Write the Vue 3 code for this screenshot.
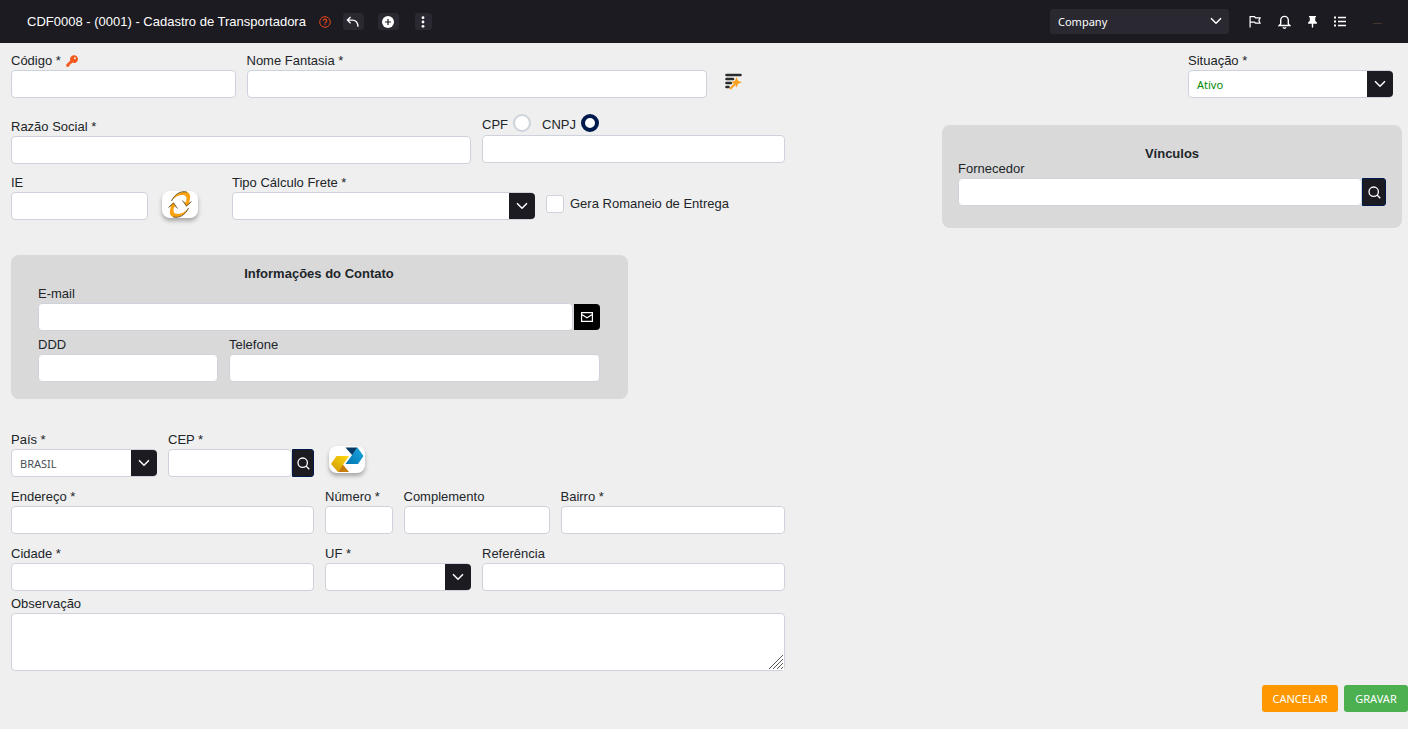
<script setup>
import { reactive } from 'vue'

const form = reactive({
  codigo: '',
  nomeFantasia: '',
  razaoSocial: '',
  tipoDocumento: 'cnpj',
  documento: '',
  ie: '',
  tipoFrete: '',
  romaneio: false,
  email: '',
  ddd: '',
  telefone: '',
  pais: 'BRASIL',
  cep: '',
  endereco: '',
  numero: '',
  complemento: '',
  bairro: '',
  cidade: '',
  uf: '',
  referencia: '',
  observacao: '',
  situacao: 'Ativo',
  fornecedor: '',
  empresa: 'Company',
})
</script>

<template>
  <div class="page">
    <header class="topbar">
      <h1 class="title">CDF0008 - (0001) - Cadastro de Transportadora</h1>
      <div class="title-actions">
        <button type="button" class="help" aria-label="Ajuda">
          <svg width="12" height="12" viewBox="0 0 12 12" fill="none" stroke="currentColor">
            <circle cx="6" cy="6" r="5.3" />
            <path d="M4.3 4.8a1.7 1.7 0 1 1 2.5 1.5c-.5.3-.8.5-.8 1.1M6 8.2v1.1" stroke-width="1.2" />
          </svg>
        </button>
        <button type="button" class="chip" aria-label="Voltar">
          <svg width="14" height="12" viewBox="0 0 14 12" fill="none" stroke="currentColor" stroke-width="1.3">
            <path d="M4.6 1 1.4 4.1l3.2 3.1M1.6 4.1h4.6c3.6 0 5.6 2.6 5.8 6.6" />
          </svg>
        </button>
        <button type="button" class="chip chip-add" aria-label="Adicionar">
          <svg width="12" height="12" viewBox="0 0 12 12">
            <circle cx="6" cy="6" r="6" fill="#fff" />
            <path d="M6 3v6M3 6h6" stroke="#1c1b21" stroke-width="1.2" />
          </svg>
        </button>
        <button type="button" class="chip chip-more" aria-label="Mais opções">
          <svg width="4" height="12" viewBox="0 0 4 12" fill="currentColor">
            <circle cx="2" cy="1.7" r="1.4" />
            <circle cx="2" cy="6" r="1.4" />
            <circle cx="2" cy="10.3" r="1.4" />
          </svg>
        </button>
      </div>

      <div class="company">
        <select v-model="form.empresa" aria-label="Empresa">
          <option>Company</option>
        </select>
        <svg width="12" height="8" viewBox="0 0 12 8" fill="none" stroke="currentColor" stroke-width="1.5">
          <path d="m1 1.2 5 5 5-5" />
        </svg>
      </div>

      <nav class="tools" aria-label="Ferramentas">
        <button type="button" aria-label="Sinalizar">
          <svg width="12" height="13" viewBox="0 0 12 13" fill="none" stroke="currentColor" stroke-width="1.2">
            <path d="M1.1 12.6V1.600h4.500l.8 1.200h4.700L9.900 5.400l1.200 2.800H6.400L5.600 7.200H1.100" />
          </svg>
        </button>
        <button type="button" aria-label="Notificações">
          <svg width="13" height="14" viewBox="0 0 13 14" fill="none" stroke="currentColor" stroke-width="1.4">
            <path d="M2.700 9V5.200a3.800 3.800 0 0 1 7.600 0V9l1.500 1.500H1.200zM5 12.300c.3.600.8.900 1.500.9s1.200-.3 1.500-.9" />
          </svg>
        </button>
        <button type="button" aria-label="Fixar">
          <svg width="9" height="12" viewBox="0 0 9 12" fill="currentColor">
            <path d="M1 0h7v1.200H7.200v3.600L8.900 6.500v1.300H5.200V11l-.7 1-.7-1V7.800H.1V6.500l1.700-1.700V1.200H1z" />
          </svg>
        </button>
        <button type="button" aria-label="Lista">
          <svg width="12" height="11" viewBox="0 0 12 11" fill="currentColor">
            <path d="M0 .5h2v2H0zM0 4.500h2v2H0zM0 8.500h2v2H0zM4 .800h8v1.400H4zM4 4.800h8v1.400H4zM4 8.800h8v1.400H4z" />
          </svg>
        </button>
        <span class="user-mark"></span>
      </nav>
    </header>

    <form class="body" @submit.prevent>
      <div class="main">
        <div class="row">
          <div class="field s3">
            <label for="codigo">Código *
              <svg class="key" width="12" height="12" viewBox="0 0 12 12" fill="#f4581c">
                <path fill-rule="evenodd" d="M7.800.3a3.800 3.800 0 1 1-1.100 7.300l-.9.900H4.700v1.100H3.600v1.200l-.9.900H.3V9.400l4-4A3.800 3.800 0 0 1 7.800.3zm1.100 1.900a1 1 0 1 0 0 2 1 1 0 0 0 0-2z" />
              </svg>
            </label>
            <input id="codigo" v-model="form.codigo" type="text" />
          </div>
          <div class="field s6">
            <label for="nome">Nome Fantasia *</label>
            <input id="nome" v-model="form.nomeFantasia" type="text" />
          </div>
          <button type="button" class="magic" aria-label="Preencher automaticamente">
            <svg width="18" height="17" viewBox="0 0 18 17" fill="none" stroke-linecap="round">
              <path d="M1.500 2h14M1.500 6h6.500M1.500 10h4.500M1.500 14h2" stroke="#2b2b2b" stroke-width="2.600" />
              <path d="m5.500 15.500 4-4" stroke="#f9a01b" stroke-width="2" />
              <path d="m11.500 4 1.500 3.700 4 1.500-4 1.500-1.500 4-1.500-4L6 9.200 10 7.700z" fill="#f9a01b" />
            </svg>
          </button>
        </div>

        <div class="row row-document">
          <div class="field s6">
            <label for="razao">Razão Social *</label>
            <input id="razao" v-model="form.razaoSocial" type="text" />
          </div>
          <div class="field s4">
            <div class="radios">
              <label for="cpf">CPF</label>
              <input id="cpf" v-model="form.tipoDocumento" type="radio" name="doc" value="cpf" />
              <label for="cnpj">CNPJ</label>
              <input id="cnpj" v-model="form.tipoDocumento" type="radio" name="doc" value="cnpj" />
            </div>
            <input v-model="form.documento" type="text" aria-label="Número do documento" />
          </div>
        </div>

        <div class="row-freight">
          <div class="field ie">
            <label for="ie">IE</label>
            <input id="ie" v-model="form.ie" type="text" />
          </div>
          <button type="button" class="tile" aria-label="Consultar IE">
            <svg width="26" height="27" viewBox="0 0 26 27">
              <g v-for="turn in [0, 180]" :key="turn" :transform="`rotate(${turn} 13 13.5)`">
                <path d="M4.500 10C7.500 3 15-.8 20.500 1.300c3.500 1.600 3 6.200 1.500 10.200l2-.8-4.500 5-2.500-5.200 1.800.8c1-2.800 1.200-5.800-1-6.800C13.500 2.800 7.500 6 4.500 10z" fill="#f9a10c" />
                <path d="M4.500 10C7.500 3 14.500-.8 20 1.200M15.500 9.500l4 5.500 5-4.500" fill="none" stroke="#5d482c" stroke-width=".9" />
              </g>
            </svg>
          </button>
          <div class="field">
            <label for="frete">Tipo Cálculo Frete *</label>
            <div class="select">
              <select id="frete" v-model="form.tipoFrete"><option value=""></option></select>
              <span class="arrow"><svg width="12" height="8" viewBox="0 0 12 8"><path d="m1 1.200 5 5 5-5" /></svg></span>
            </div>
          </div>
          <div class="check">
            <input id="romaneio" v-model="form.romaneio" type="checkbox" />
            <label for="romaneio">Gera Romaneio de Entrega</label>
          </div>
        </div>

        <div class="row row-contact">
          <section class="card contact s8">
            <h2>Informações do Contato</h2>
            <div class="field">
              <label for="email">E-mail</label>
              <div class="group">
                <input id="email" v-model="form.email" type="email" />
                <button type="button" class="mail" aria-label="Enviar e-mail">
                  <svg width="12" height="10" viewBox="0 0 12 10" fill="none" stroke="#fff" stroke-width="1.200">
                    <path d="M.6.6h10.800v8.800H.6zM.8 2.600 6 5.800l5.200-3.200" />
                  </svg>
                </button>
              </div>
            </div>
            <div class="phones">
              <div class="field">
                <label for="ddd">DDD</label>
                <input id="ddd" v-model="form.ddd" type="tel" />
              </div>
              <div class="field">
                <label for="telefone">Telefone</label>
                <input id="telefone" v-model="form.telefone" type="tel" />
              </div>
            </div>
          </section>
        </div>

        <div class="row row-country">
          <div class="field s2">
            <label for="pais">País *</label>
            <div class="select">
              <select id="pais" v-model="form.pais"><option>BRASIL</option></select>
              <span class="arrow"><svg width="12" height="8" viewBox="0 0 12 8"><path d="m1 1.200 5 5 5-5" /></svg></span>
            </div>
          </div>
          <div class="field s2">
            <label for="cep">CEP *</label>
            <div class="group">
              <input id="cep" v-model="form.cep" type="text" />
              <button type="button" class="search search-cep" aria-label="Buscar CEP">
                <svg width="13" height="13" viewBox="0 0 13 13"><circle cx="5.700" cy="5.700" r="4.700" /><path d="m9 9 3.300 3.300" /></svg>
              </button>
            </div>
          </div>
          <button type="button" class="tile tile-cep" aria-label="Consultar nos Correios">
            <svg width="34" height="26" viewBox="0 0 34 26">
              <defs>
                <linearGradient id="gold" x1="1" y1="0" x2="0" y2="1"><stop offset="0" stop-color="#ffdd12" /><stop offset="1" stop-color="#cf9500" /></linearGradient>
                <linearGradient id="blue" x1="1" y1="0" x2="0" y2="1"><stop offset="0" stop-color="#1ba9e3" /><stop offset="1" stop-color="#0075ae" /></linearGradient>
              </defs>
              <path d="M15.500.5h12l-5 8z" fill="#073b65" />
              <path d="M27.500.5 33.500 9l-5.500 8H15.500z" fill="url(#blue)" />
              <path d="M8 25h11l-6.500-8z" fill="#c67b0b" />
              <path d="M6.500 9H19L8 25 1 17z" fill="url(#gold)" />
            </svg>
          </button>
        </div>

        <div class="row row-close">
          <div class="field s4">
            <label for="endereco">Endereço *</label>
            <input id="endereco" v-model="form.endereco" type="text" />
          </div>
          <div class="field s1">
            <label for="numero">Número *</label>
            <input id="numero" v-model="form.numero" type="text" />
          </div>
          <div class="field s2">
            <label for="complemento">Complemento</label>
            <input id="complemento" v-model="form.complemento" type="text" />
          </div>
          <div class="field s3">
            <label for="bairro">Bairro *</label>
            <input id="bairro" v-model="form.bairro" type="text" />
          </div>
        </div>

        <div class="row row-close">
          <div class="field s4">
            <label for="cidade">Cidade *</label>
            <input id="cidade" v-model="form.cidade" type="text" />
          </div>
          <div class="field s2">
            <label for="uf">UF *</label>
            <div class="select">
              <select id="uf" v-model="form.uf"><option value=""></option></select>
              <span class="arrow"><svg width="12" height="8" viewBox="0 0 12 8"><path d="m1 1.200 5 5 5-5" /></svg></span>
            </div>
          </div>
          <div class="field s4">
            <label for="referencia">Referência</label>
            <input id="referencia" v-model="form.referencia" type="text" />
          </div>
        </div>

        <div class="field notes">
          <label for="obs">Observação</label>
          <textarea id="obs" v-model="form.observacao"></textarea>
          <svg class="grip" width="16" height="16" viewBox="0 0 16 16">
            <path d="M1 15 15 1M5 15 15 5M9 15l6-6M13 15l2-2" fill="none" stroke="#555" />
          </svg>
        </div>
      </div>

      <aside class="side">
        <div class="field status">
          <label for="situacao">Situação *</label>
          <div class="select">
            <select id="situacao" v-model="form.situacao"><option>Ativo</option></select>
            <span class="arrow"><svg width="12" height="8" viewBox="0 0 12 8"><path d="m1 1.200 5 5 5-5" /></svg></span>
          </div>
        </div>
        <section class="card links">
          <h2>Vínculos</h2>
          <div class="field">
            <label for="fornecedor">Fornecedor</label>
            <div class="group">
              <input id="fornecedor" v-model="form.fornecedor" type="text" />
              <button type="button" class="search" aria-label="Buscar fornecedor">
                <svg width="13" height="13" viewBox="0 0 13 13"><circle cx="5.700" cy="5.700" r="4.700" /><path d="m9 9 3.300 3.300" /></svg>
              </button>
            </div>
          </div>
        </section>
      </aside>

      <footer class="actions">
        <button type="button" class="cancel">CANCELAR</button>
        <button type="submit" class="save">GRAVAR</button>
      </footer>
    </form>
  </div>
</template>

<style>
body {
  background: #efefef;
}
</style>

<style scoped>
.page {
  --dark: #1c1b21;
  --line: #ced2db;
  font-family: "Liberation Sans", Arial, sans-serif;
  font-size: 13px;
  color: #212529;
}
.page *,
.page *::before {
  box-sizing: border-box;
}
button,
input,
select,
textarea {
  font: inherit;
  color: inherit;
  margin: 0;
}
button {
  border: 0;
  padding: 0;
  background: none;
  cursor: pointer;
  display: flex;
  align-items: center;
  justify-content: center;
}

.topbar {
  display: flex;
  align-items: center;
  height: 43px;
  padding: 0 26px 0 27px;
  background: var(--dark);
  color: #fff;
}
.title {
  margin: 0;
  font-size: 13px;
  font-weight: 400;
  line-height: 20px;
  white-space: nowrap;
}
.title-actions {
  display: flex;
  align-items: center;
  margin-left: 13px;
}
.help {
  color: #e8461e;
  margin-right: 12px;
}
.chip {
  width: 21px;
  height: 17px;
  border-radius: 3px;
  background: #2a2932;
}
.chip-add {
  margin-left: 14px;
}
.chip-more {
  width: 17px;
  margin-left: 16px;
}
.company {
  position: relative;
  width: 179px;
  margin-left: auto;
}
.company select {
  appearance: none;
  display: block;
  width: 100%;
  height: 25px;
  padding: 0 30px 0 8px;
  border: 0;
  border-radius: 3px;
  background: #2a2932;
  font-family: "Noto Sans", sans-serif;
  font-size: 11px;
}
.company svg {
  position: absolute;
  right: 7px;
  top: 8px;
  pointer-events: none;
}
.tools {
  display: flex;
  align-items: center;
  gap: 17px;
  margin-left: 20px;
}
.user-mark {
  width: 9px;
  height: 1px;
  margin: 3px 0 0 10px;
  background: #453429;
}

.body {
  display: grid;
  grid-template-columns: minmax(0, 774fr) minmax(0, 460fr);
  column-gap: 157px;
  padding: 9px 6px 0 11px;
}
.row {
  display: grid;
  grid-template-columns: repeat(10, minmax(0, 1fr));
  column-gap: 11px;
}
.s1 { grid-column: span 1; }
.s2 { grid-column: span 2; }
.s3 { grid-column: span 3; }
.s4 { grid-column: span 4; }
.s6 { grid-column: span 6; }
.s8 { grid-column: span 8; }

.row-document {
  margin-top: 20px;
}
.row-freight {
  display: grid;
  grid-template-columns: minmax(0, 148fr) minmax(0, 73fr) minmax(0, 303fr) minmax(0, 250fr);
  margin-top: 10px;
}
.ie {
  margin-right: 11px;
}
.row-contact {
  margin-top: 35px;
}
.row-country {
  margin-top: 32px;
}
.row-close {
  margin-top: 11px;
}

label {
  display: block;
  height: 18px;
  line-height: 18px;
  white-space: nowrap;
}
.key {
  margin-left: 2px;
  vertical-align: -2px;
}
input[type="text"],
input[type="email"],
input[type="tel"],
.select select,
textarea {
  display: block;
  width: 100%;
  height: 28px;
  padding: 0 8px;
  border: 1px solid var(--line);
  border-radius: 4px;
  background: #fff;
}
.select {
  position: relative;
}
.select select {
  appearance: none;
  padding-right: 30px;
  font-family: "Noto Sans", sans-serif;
  font-size: 11px;
  color: #495057;
}
.arrow {
  position: absolute;
  top: 1px;
  right: 0;
  bottom: 1px;
  width: 26px;
  display: flex;
  align-items: center;
  justify-content: center;
  border-radius: 0 4px 4px 0;
  background: var(--dark);
  pointer-events: none;
}
.arrow path {
  fill: none;
  stroke: #fff;
  stroke-width: 1.5;
}
.group {
  display: flex;
}
.group input {
  flex: 1;
  min-width: 0;
}
.search {
  flex: none;
  width: 24px;
  height: 28px;
  border: 1px solid #001a4d;
  border-radius: 0 3px 3px 0;
  background: var(--dark);
}
.search-cep {
  width: 22px;
}
.search svg {
  fill: none;
  stroke: #fff;
  stroke-width: 1.3;
}
.mail {
  flex: none;
  width: 26px;
  height: 26px;
  margin: 1px 0 0 1px;
  border-radius: 0 4px 4px 0;
  background: #000;
}
.magic {
  justify-self: start;
  align-self: start;
  margin: 21px 0 0 7px;
}
.radios {
  display: flex;
  align-items: center;
  height: 18px;
  margin: -2px 0 1px;
}
.radios input {
  appearance: none;
  width: 18px;
  height: 18px;
  margin: 0 11px 4px 5px;
  border: 2px solid var(--line);
  border-radius: 50%;
  background: #fff;
}
.radios input:checked {
  border: 4px solid #001a4d;
}
.check {
  display: flex;
  align-items: center;
  gap: 6px;
  height: 18px;
  margin: 21px 0 0 11px;
}
.check input {
  appearance: none;
  flex: none;
  width: 18px;
  height: 18px;
  border: 1px solid var(--line);
  border-radius: 3px;
  background: #fff;
}
.tile {
  width: 36px;
  height: 27px;
  margin: 17px 0 0 3px;
  border-radius: 8px;
  background: #fff;
  box-shadow: 0 3px 4px rgba(0, 0, 0, 0.3);
}
.tile-cep {
  margin: 15px 0 0 4px;
}

.card {
  border-radius: 8px;
  background: #d9d9d9;
}
.card h2 {
  margin: 0;
  font-size: 13px;
  line-height: 18px;
  text-align: center;
}
.contact {
  padding: 10px 28px 17px 27px;
}
.contact h2 {
  margin-bottom: 2px;
}
.phones {
  display: grid;
  grid-template-columns: minmax(0, 180fr) minmax(0, 371fr);
  column-gap: 11px;
  margin-top: 5px;
}
.notes {
  position: relative;
  margin-top: 4px;
}
.notes textarea {
  height: 58px;
  padding: 6px 8px;
  resize: vertical;
}
.grip {
  position: absolute;
  right: 1px;
  bottom: 1px;
  background: #fff;
  pointer-events: none;
}

.status {
  width: 205px;
  margin: 0 9px 0 auto;
}
.status select {
  color: #008a00;
}
.links {
  margin-top: 27px;
  padding: 20px 16px 22px;
}
.links label {
  height: 15px;
  line-height: 12px;
}

.actions {
  grid-column: 1 / -1;
  display: flex;
  justify-content: flex-end;
  gap: 6px;
  margin: 14px -6px 0 0;
}
.actions button {
  height: 27px;
  padding: 0 10px;
  border-radius: 3px;
  color: #fff;
  font-family: "Noto Sans", sans-serif;
  font-size: 11px;
}
.actions .cancel {
  min-width: 76px;
  background: #ff9800;
}
.actions .save {
  min-width: 64px;
  background: #4caf50;
}
</style>
